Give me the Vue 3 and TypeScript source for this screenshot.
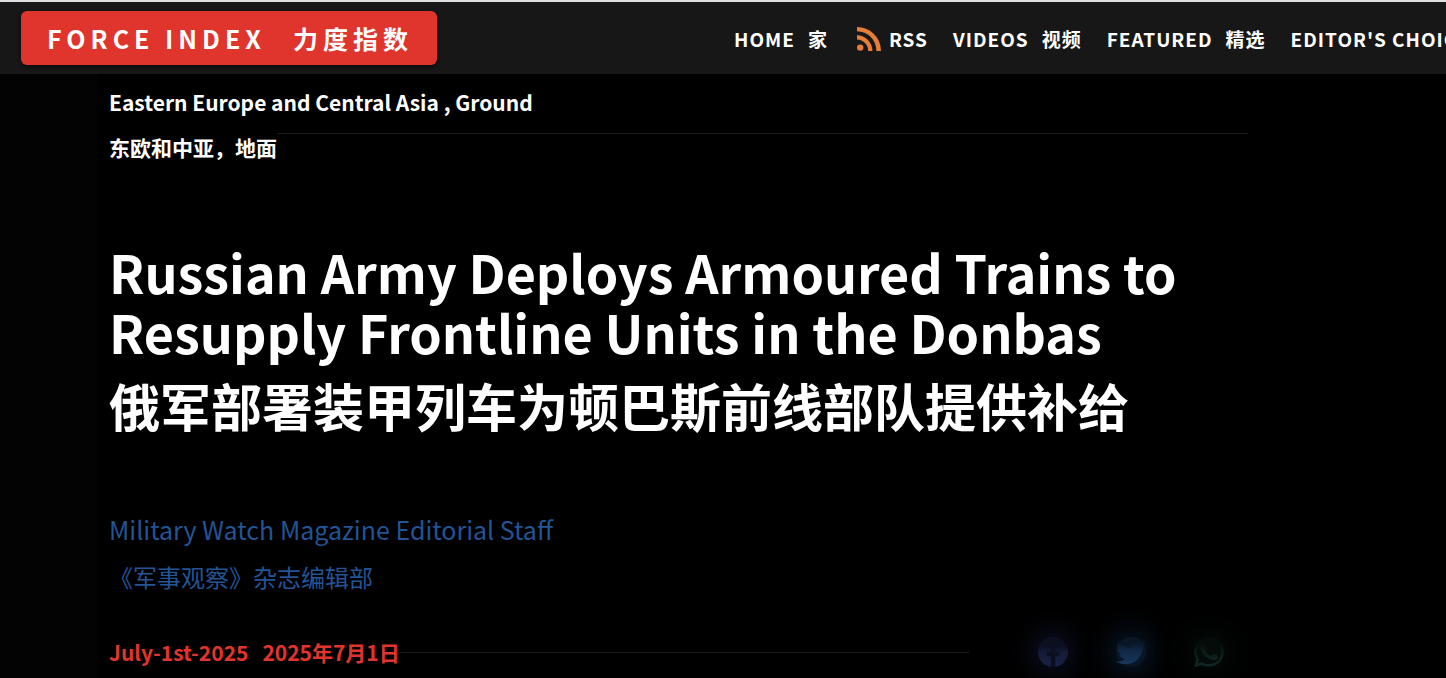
<script setup lang="ts">
interface NavItem {
  label: string
  local?: string
  rss?: boolean
}

const navItems: NavItem[] = [
  { label: 'HOME', local: '家' },
  { label: 'RSS', rss: true },
  { label: 'VIDEOS', local: '视频' },
  { label: 'FEATURED', local: '精选' },
  { label: "EDITOR'S CHOICE" },
]
</script>

<template>
  <div class="page">
    <header class="topbar">
      <a class="brand" href="#"><span>FORCE INDEX</span><span lang="zh">力度指数</span></a>
      <nav class="menu" aria-label="Main">
        <a v-for="item in navItems" :key="item.label" class="menu-link" :class="{ feed: item.rss }" href="#">
          <svg v-if="item.rss" class="rss" viewBox="0 0 24 24" aria-hidden="true">
            <circle cx="3.2" cy="20.6" r="3.2" />
            <path d="M0 8.2v4.2A11.4 11.4 0 0 1 11.2 24h4.2A15.6 15.6 0 0 0 0 8.2z" />
            <path d="M0 0v4.2A19.6 19.6 0 0 1 19.4 24H24A24 24 0 0 0 0 0z" />
          </svg>
          <span>{{ item.label }}</span>
          <span v-if="item.local" lang="zh">{{ item.local }}</span>
        </a>
      </nav>
    </header>

    <main class="article">
      <p class="tags">Eastern Europe and Central Asia , Ground</p>
      <div class="tags-local">
        <p class="tags" lang="zh">东欧和中亚，地面</p>
        <span class="rule"></span>
      </div>

      <h1 class="title">
        Russian Army Deploys Armoured Trains to Resupply Frontline Units in the Donbas
        <span class="title-local" lang="zh">俄军部署装甲列车为顿巴斯前线部队提供补给</span>
      </h1>

      <p class="author">Military Watch Magazine Editorial Staff</p>
      <p class="author author-local" lang="zh">《军事观察》杂志编辑部</p>

      <div class="meta">
        <p class="date"><span>July-1st-2025</span><span lang="zh">2025年7月1日</span></p>
        <span class="rule"></span>
        <div class="share">
          <a class="social facebook" href="#" aria-label="Facebook">
            <svg viewBox="0 0 30 30" aria-hidden="true">
              <defs>
                <linearGradient id="fb" gradientUnits="userSpaceOnUse" x1="0" y1="0" x2="0" y2="30">
                  <stop offset="0.3" stop-color="#0c0f20" />
                  <stop offset="0.5" stop-color="#151a36" />
                  <stop offset="1" stop-color="#1a2145" />
                </linearGradient>
              </defs>
              <path fill="url(#fb)" d="M15 0a15 15 0 0 0-2.300 29.820V19.300H8.900V15h3.800v-3.300c0-3.800 2.200-5.900 5.700-5.900 1.600 0 3.300.3 3.300.3v3.700h-1.900c-1.800 0-2.400 1.100-2.400 2.300V15h4.100l-.7 4.300h-3.400v10.500A15 15 0 0 0 15 0z" />
            </svg>
          </a>
          <a class="social twitter" href="#" aria-label="Twitter">
            <svg viewBox="0 0 30 30" aria-hidden="true">
              <defs>
                <linearGradient id="tw" gradientUnits="userSpaceOnUse" x1="0" y1="0" x2="0" y2="30">
                  <stop offset="0.2" stop-color="#081626" />
                  <stop offset="0.45" stop-color="#102844" />
                  <stop offset="0.9" stop-color="#16365c" />
                </linearGradient>
              </defs>
              <path fill="url(#tw)" d="M26.900 8.900c0 .3 0 .5 0 .8C26.900 17.800 20.700 27.200 9.400 27.200c-3.500 0-6.700-1-9.400-2.800.5.1 1 .1 1.500.1 2.900 0 5.500-1 7.600-2.600-2.700-.1-5-1.800-5.700-4.300.9.200 1.800.1 2.700-.1-2.800-.6-4.900-3-4.900-6v-.1c.8.5 1.800.7 2.800.8C1.200 10.400.4 6.800 2.100 4c3 3.700 7.600 6.200 12.700 6.500C13.700 6.100 16.800 2.800 20.800 2.800c1.800 0 3.400.7 4.500 1.900 1.400-.3 2.700-.8 3.900-1.500-.5 1.400-1.400 2.600-2.700 3.400 1.200-.1 2.400-.5 3.500-.9-.8 1.200-1.900 2.300-3.100 3.200z" />
            </svg>
          </a>
          <a class="social whatsapp" href="#" aria-label="WhatsApp">
            <svg viewBox="0 0 30 30" aria-hidden="true">
              <defs>
                <linearGradient id="wa" gradientUnits="userSpaceOnUse" x1="0" y1="0" x2="0" y2="30">
                  <stop offset="0.2" stop-color="#040b08" />
                  <stop offset="0.5" stop-color="#0a1b18" />
                  <stop offset="1" stop-color="#0f2926" />
                </linearGradient>
              </defs>
              <path fill="url(#wa)" fill-rule="evenodd" d="M15.100 0A14.800 14.800 0 0 0 2.300 22.300L.2 30l7.900-2.100A14.800 14.800 0 1 0 15.100 0zm0 2.500a12.300 12.300 0 1 1-6.300 22.900l-.5-.3-4.600 1.200 1.300-4.500-.4-.5A12.300 12.300 0 0 1 15.100 2.500z" />
              <path fill="url(#wa)" d="M10 7.900c-.3-.7-.6-.7-.9-.7h-.8c-.8.1-2.200 1.400-2.200 3.600 0 2.100 1.600 4.200 1.800 4.500.2.300 3.100 4.900 7.600 6.700 3.800 1.500 4.500 1.200 5.300 1.100.9-.1 2.700-1.100 3-2.100.4-1.100.4-2 .3-2.100-.5-.6-3.700-2.100-4-2.100-.3 0-.6 0-.9.500l-1.300 1.600c-.3.300-.5.300-1 .1-1.800-.9-4.300-2.600-5.600-5.200-.3-.5 0-.7.200-.9l1-1.300c.1-.3.100-.6 0-.8z" />
            </svg>
          </a>
        </div>
      </div>
    </main>
  </div>
</template>

<style>
body {
  margin: 0;
  background: #000;
}
</style>

<style scoped>
.page {
  min-height: 100vh;
  box-sizing: border-box;
  overflow: hidden;
  background: #030303;
  color: #fff;
  font-family: "Noto Sans CJK SC", "Noto Sans", sans-serif;
}

p,
h1 {
  margin: 0;
}

a {
  color: inherit;
  text-decoration: none;
}

.topbar {
  display: flex;
  align-items: center;
  justify-content: space-between;
  height: 72px;
  padding-left: 21px;
  border-top: 2px solid #dfe1e3;
  background: #171717;
  overflow: hidden;
}

.brand {
  display: flex;
  flex: none;
  gap: 27px;
  padding: 0 24px 0 26px;
  border-radius: 6px;
  background: #e0352d;
  box-shadow: 0 2px 4px rgba(0, 0, 0, 0.5);
  font-size: 25px;
  font-weight: 700;
  line-height: 54px;
  letter-spacing: 5px;
}

.menu {
  display: flex;
  flex: none;
  gap: 25px;
  margin-right: -24px;
  padding-top: 1px;
}

.menu-link {
  display: flex;
  align-items: center;
  gap: 13px;
  font-size: 19px;
  font-weight: 700;
  line-height: 54px;
  letter-spacing: 1px;
  white-space: nowrap;
}

.feed {
  gap: 8px;
  padding-left: 4px;
}

.rss {
  width: 24px;
  height: 24px;
  fill: #e67e3a;
}

.article {
  box-sizing: border-box;
  min-height: calc(100vh - 74px);
  margin-left: 97px;
  padding: 14px 198px 0 12px;
  background: #000;
}

.tags {
  font-size: 21px;
  font-weight: 700;
  line-height: 28px;
}

.tags-local {
  display: flex;
  margin-top: 17px;
}

.rule {
  flex: 1;
  height: 1px;
  background: #1c1c1c;
}

.title {
  margin-top: 81px;
  font-size: 52px;
  font-weight: 700;
  line-height: 60px;
}

.title-local {
  display: block;
  font-size: 51px;
  line-height: 86px;
}

.author {
  margin-top: 57px;
  color: #225496;
  font-size: 25px;
  line-height: 48px;
}

.author-local {
  margin-top: 0;
  font-size: 24px;
}

.meta {
  display: flex;
  align-items: center;
  margin-top: 36px;
}

.date {
  display: flex;
  gap: 14px;
  color: #e0352d;
  font-size: 21px;
  font-weight: 700;
  line-height: 30px;
}

.share {
  display: flex;
  gap: 48px;
  margin-left: 69px;
  padding-right: 24px;
}

.social {
  width: 30px;
  height: 30px;
  border-radius: 50%;
}

.social svg {
  display: block;
  width: 30px;
  height: 30px;
}

.facebook {
  background: #0c0f20;
  box-shadow: 0 0 28px 8px #0c0f20;
}

.twitter {
  background: #081626;
  box-shadow: 0 0 28px 8px #081626;
}

.whatsapp {
  background: #040b08;
  box-shadow: 0 0 28px 8px #040b08;
}
</style>
